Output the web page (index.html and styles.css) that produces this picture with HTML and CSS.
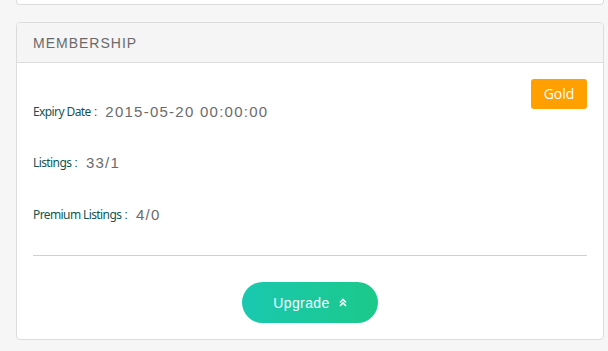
FILE: index.html
```html
<!DOCTYPE html>
<html>
<head>
<meta charset="utf-8">
<link rel="stylesheet" href="styles.css">
</head>
<body>
<div class="page">
  <div class="card card-prev"></div>
  <div class="card">
    <div class="card-header">Membership</div>
    <div class="card-body">
      <span class="badge">Gold</span>
      <div class="rows">
        <div class="row"><span class="label">Expiry Date</span><span class="colon">:</span><span class="value">2015-05-20 00:00:00</span></div>
        <div class="row"><span class="label">Listings</span><span class="colon">:</span><span class="value">33/1</span></div>
        <div class="row"><span class="label">Premium Listings</span><span class="colon">:</span><span class="value">4/0</span></div>
      </div>
      <hr class="divider">
      <div class="actions">
        <button class="btn-upgrade">Upgrade
          <svg class="chev" width="8" height="9" viewBox="0 0 8 9"><path d="M1 4.5 L4 1.5 L7 4.5 M1 8 L4 5 L7 8" fill="none" stroke="#fff" stroke-width="1.6"/></svg>
        </button>
      </div>
    </div>
  </div>
</div>
</body>
</html>
```
FILE: styles.css
```css
html, body {
  margin: 0;
  padding: 0;
  background: #f6f6f6;
  font-family: "Liberation Sans", Arial, sans-serif;
}
.page {
  padding: 0 4px 0 16px;
}
.card {
  background: #fff;
  border: 1px solid #dcdcdc;
  border-radius: 4px;
  overflow: hidden;
}
.card-prev {
  height: 4px;
  border-top: none;
  border-radius: 0 0 4px 4px;
  margin-bottom: 17px;
}
.card-header {
  height: 39px;
  background: #f5f5f5;
  border-bottom: 1px solid #dcdcdc;
  padding: 0 16px;
  display: flex;
  align-items: center;
  text-transform: uppercase;
  font-size: 14px;
  letter-spacing: 1px;
  color: #6a6a6a;
}
.card-body {
  padding: 16px;
}
.badge {
  float: right;
  width: 56px;
  height: 30px;
  line-height: 30px;
  text-align: center;
  background: #ff9f00;
  color: #fff;
  border-radius: 3px;
  font-family: "Open Sans", "Noto Sans", sans-serif;
  font-size: 14px;
}
.rows {
  padding-top: 22px;
  display: flex;
  flex-direction: column;
  gap: 31.5px;
}
.row {
  height: 20px;
  display: flex;
  align-items: center;
}
.label {
  font-family: "Noto Sans", sans-serif;
  font-size: 12px;
  letter-spacing: -0.6px;
  color: #0f5555;
}
.colon {
  font-family: "Liberation Sans", sans-serif;
  font-size: 13px;
  color: #0f5555;
  margin: 0 8px 0 3px;
}
.value {
  font-family: "Liberation Sans", sans-serif;
  font-size: 15px;
  letter-spacing: 1.25px;
  color: #6b6b6b;
}
.divider {
  clear: both;
  border: none;
  border-top: 1px solid #cfcfcf;
  margin: 31px 0 0;
  height: 0;
}
.actions {
  display: flex;
  justify-content: center;
  margin-top: 26px;
}
.btn-upgrade {
  width: 136px;
  height: 41px;
  border: none;
  border-radius: 21px;
  background: linear-gradient(90deg, #1ac8b0, #1bc98a);
  color: #fff;
  font-family: "Liberation Sans", sans-serif;
  font-size: 14px;
  letter-spacing: 0.4px;
  display: flex;
  align-items: center;
  justify-content: center;
  gap: 9px;
  padding: 0;
}
.chev {
  display: block;
}
```
